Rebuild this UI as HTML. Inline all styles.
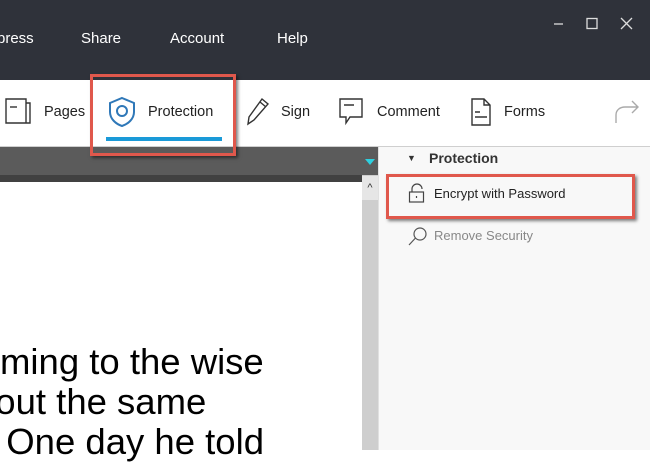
<!DOCTYPE html>
<html><head><style>
body{margin:0;width:650px;height:450px;overflow:hidden;position:relative;font-family:"Liberation Sans",sans-serif;background:#fff}
.a{position:absolute}
.menu{color:#fff;font-size:15px;top:30px}
.tb{font-size:14.5px;color:#222;top:104px}
.doc{font-size:36.5px;color:#000;left:0;white-space:nowrap}
</style></head><body>
<div class="a" style="left:0;top:0;width:650px;height:80px;background:#2f323a"></div>
<div class="a menu" style="left:-3px">press</div>
<div class="a menu" style="left:81px">Share</div>
<div class="a menu" style="left:170px">Account</div>
<div class="a menu" style="left:277px">Help</div>
<svg class="a" style="left:540px;top:14px" width="100" height="20" stroke="#ddd" stroke-width="1.3" fill="none">
<path d="M14 10h9"/><rect x="47" y="4.5" width="10" height="10"/><path d="M81 4l11 11M92 4l-11 11"/></svg>
<div class="a" style="left:0;top:80px;width:650px;height:66px;background:#fff;border-bottom:1px solid #cfcfcf"></div>
<svg class="a" style="left:4px;top:97px" width="30" height="30" fill="none" stroke="#333" stroke-width="1.4">
<path d="M2 2h20v24H2z M22 6h4v20h-4"/><path d="M6 10h7"/></svg>
<div class="a tb" style="left:44px">Pages</div>
<svg class="a" style="left:108px;top:96px" width="30" height="32" fill="none" stroke="#2f78b8" stroke-width="2">
<path d="M14 2 L26 7 V16 C26 23 20 28 14 30 C8 28 2 23 2 16 V7 Z"/><circle cx="14" cy="15" r="5"/></svg>
<div class="a tb" style="left:148px">Protection</div>
<div class="a" style="left:106px;top:137px;width:116px;height:4px;background:#1a9ad8"></div>
<svg class="a" style="left:244px;top:96px" width="30" height="32" fill="none" stroke="#333" stroke-width="1.4">
<path d="M18 3 L24 8 L10 24 L4 28 L5 21 Z M16 6l6 5"/></svg>
<div class="a tb" style="left:281px">Sign</div>
<svg class="a" style="left:338px;top:97px" width="30" height="32" fill="none" stroke="#333" stroke-width="1.4">
<path d="M2 2h22v18H12l-4 6v-6H2z M6 8h10"/></svg>
<div class="a tb" style="left:377px">Comment</div>
<svg class="a" style="left:470px;top:97px" width="26" height="32" fill="none" stroke="#333" stroke-width="1.4">
<path d="M2 2h12l6 6v20H2z M14 2v6h6 M5 15h5 M5 20h12"/></svg>
<div class="a tb" style="left:504px">Forms</div>
<svg class="a" style="left:612px;top:99px" width="30" height="26" fill="none" stroke="#aaa" stroke-width="1.4">
<path d="M4 24v-8c0-5 4-8 9-8h13 M20 2l6 6-6 6"/></svg>
<div class="a" style="left:0;top:147px;width:378px;height:28px;background:#5b5b5b"></div>
<div class="a" style="left:0;top:175px;width:362px;height:7px;background:#414141"></div>
<div class="a" style="left:365px;top:159px;width:0;height:0;border-left:5px solid transparent;border-right:5px solid transparent;border-top:6px solid #2dd0e0"></div>
<div class="a" style="left:362px;top:175px;width:16px;height:275px;background:#cecece"></div>
<div class="a" style="left:362px;top:176px;width:16px;height:24px;background:#e6e6e6;color:#333;font-size:11px;text-align:center;line-height:24px">&#94;</div>
<div class="a" style="left:0;top:182px;width:362px;height:268px;background:#fff"></div>
<div class="a doc" style="top:341px">ming to the wise</div>
<div class="a doc" style="top:381px;left:-25px">bout the same</div>
<div class="a doc" style="top:421px;left:-14px">. One day he told</div>
<div class="a" style="left:378px;top:147px;width:272px;height:303px;background:#f8f8f8;border-left:1px solid #e0e0e0"></div>
<div class="a" style="left:407px;top:153px;font-size:9px;color:#333">&#9660;</div>
<div class="a" style="left:429px;top:150px;font-size:14px;font-weight:bold;color:#333">Protection</div>
<svg class="a" style="left:408px;top:183px" width="18" height="22" fill="none" stroke="#444" stroke-width="1.2">
<path d="M4 9V6a5 5 0 0 1 10 0"/><rect x="1.5" y="9" width="14" height="10"/><path d="M8.5 13v2"/></svg>
<div class="a" style="left:434px;top:186px;font-size:13px;color:#222">Encrypt with Password</div>
<svg class="a" style="left:407px;top:226px" width="22" height="22" fill="none" stroke="#555" stroke-width="1.2">
<circle cx="13" cy="8" r="6"/><path d="M8.5 12 L2 19"/></svg>
<div class="a" style="left:434px;top:228px;font-size:13px;color:#888">Remove Security</div>
<div class="a" style="left:90px;top:74px;width:140px;height:76px;border:3px solid #e0584c;box-shadow:2px 2px 3px rgba(0,0,0,.5)"></div>
<div class="a" style="left:386px;top:174px;width:243px;height:39px;border:3px solid #e0584c;box-shadow:2px 2px 3px rgba(0,0,0,.5)"></div>
</body></html>
